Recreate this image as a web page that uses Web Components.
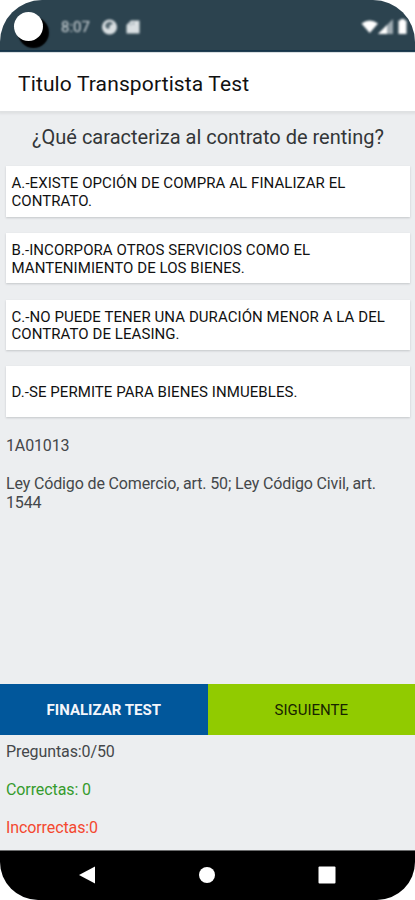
<!DOCTYPE html>
<html lang="es">
<head>
<meta charset="utf-8">
<meta name="viewport" content="width=device-width, initial-scale=1">
<title>Titulo Transportista Test</title>
<style>
    html, body {
        margin: 0;
        background: #fff;
        font-family: Roboto, "Liberation Sans", sans-serif;
    }
</style>
</head>
<body>
<test-app></test-app>

<script>
class StatusBar extends HTMLElement {

    constructor() {
        super();
        this.shadowDOM = this.attachShadow({mode: "open"});
    }

    connectedCallback() {
        this.render();
    }

    render() {
        this.shadowDOM.innerHTML = `
        <style>
            :host {
                display: flex;
                align-items: center;
                box-sizing: border-box;
                height: 52px;
                padding: 3px 4px 0 14px;
                background: #2c434f;
                border-bottom: 2px solid #153449;
                color: #d9dfe2;
            }

            .camera {
                width: 29px;
                height: 29px;
                border-radius: 50%;
                background: #fff;
                box-shadow: 5px 6px 1.5px 1px #000;
            }

            .time {
                margin-left: 18px;
                width: 41px;
                font-size: 15px;
                filter: blur(1px);
            }

            svg {
                display: block;
                fill: currentColor;
                filter: blur(0.8px);
            }

            .right {
                margin-left: auto;
                color: #fff;
            }
        </style>

        <div class="camera"></div>
        <span class="time">8:07</span>
        <svg width="40" height="18" viewBox="0 0 40 18">
            <circle cx="7.5" cy="9" r="7.5"/>
            <path d="M4 10a4 4 0 0 1 7-4l-3 1-1 4z" fill="#52656f"/>
            <path d="M29 2.500h8.500v13H24.500V7z"/>
            <path d="M28.500 5v2.500M31.500 4v3" stroke="#8d9aa2"/>
        </svg>
        <svg class="right" width="50" height="18" viewBox="0 0 50 18">
            <path d="M.500 5.500Q8.500 -0.500 17 5.500L8.700 15z"/>
            <path d="M17 16L32 1v15z" fill="#9eaab1"/>
            <path d="M17 16L26 7v9z"/>
            <path d="M37.500 2.500h2V1h4v1.500h2v13.500h-8z"/>
        </svg>`;
    }
}

class AppToolbar extends HTMLElement {

    constructor() {
        super();
        this.shadowDOM = this.attachShadow({mode: "open"});
    }

    connectedCallback() {
        this.render();
    }

    render() {
        this.shadowDOM.innerHTML = `
        <style>
            :host {
                display: flex;
                align-items: center;
                box-sizing: border-box;
                height: 59px;
                padding: 4px 18px 0;
                background: #fff;
                border-top: 1px solid #d8dee1;
                box-shadow: 0 2px 2px 1px #dfe1e3;
                color: #111;
                font-size: 21px;
                letter-spacing: 0.13px;
            }
        </style>

        <slot></slot>`;
    }
}

class AnswerOption extends HTMLElement {

    constructor() {
        super();
        this.shadowDOM = this.attachShadow({mode: "open"});
    }

    connectedCallback() {
        this.render();
    }

    render() {
        this.shadowDOM.innerHTML = `
        <style>
            :host {
                display: flex;
                align-items: center;
                box-sizing: border-box;
                height: 50.600px;
                padding: 3px 6px 0 5.500px;
                background: #fff;
                box-shadow: 0 1px 2px #c3c6c9;
                color: #111;
                font-size: 15px;
                line-height: 17.600px;
                letter-spacing: 0.07px;
            }
        </style>

        <span><slot></slot></span>`;
    }
}

class ActionButton extends HTMLElement {

    constructor() {
        super();
        this.shadowDOM = this.attachShadow({mode: "open"});
    }

    connectedCallback() {
        this.render();
    }

    render() {
        this.shadowDOM.innerHTML = `
        <style>
            :host {
                display: flex;
                align-items: center;
                justify-content: center;
                flex: 1;
                padding-top: 1px;
                background: #91cb00;
                color: #182400;
                font-size: 15px;
            }

            :host([primary]) {
                background: #01579b;
                color: #f4f6fb;
                font-weight: bold;
            }
        </style>

        <slot></slot>`;
    }
}

class ScoreBoard extends HTMLElement {

    constructor() {
        super();
        this.shadowDOM = this.attachShadow({mode: "open"});
    }

    connectedCallback() {
        this.render();
    }

    render() {
        this.shadowDOM.innerHTML = `
        <style>
            :host {
                display: flex;
                flex-direction: column;
                gap: 19px;
                box-sizing: border-box;
                height: 115px;
                padding: 7px 6px 0;
                font-size: 16px;
                line-height: 19px;
                letter-spacing: -0.1px;
                color: #44474a;
            }

            .right {
                color: #359b2d;
            }

            .wrong {
                color: #f4482f;
            }
        </style>

        <div>Preguntas:${this.getAttribute("current")}/${this.getAttribute("total")}</div>
        <div class="right">Correctas: ${this.getAttribute("right")}</div>
        <div class="wrong">Incorrectas:${this.getAttribute("wrong")}</div>`;
    }
}

class NavigationBar extends HTMLElement {

    constructor() {
        super();
        this.shadowDOM = this.attachShadow({mode: "open"});
    }

    connectedCallback() {
        this.render();
    }

    render() {
        this.shadowDOM.innerHTML = `
        <style>
            :host {
                display: flex;
                align-items: center;
                justify-content: space-between;
                box-sizing: border-box;
                height: 50px;
                padding: 0 79px 1px 78px;
                background: #000;
                border-top: 1px solid #6b6c6d;
            }

            svg {
                display: block;
                fill: #fff;
            }
        </style>

        <svg width="18" height="18" viewBox="0 0 18 18"><path d="M1 9L17 .5v17z"/></svg>
        <svg width="18" height="18" viewBox="0 0 18 18"><circle cx="9" cy="9" r="8"/></svg>
        <svg width="18" height="18" viewBox="0 0 18 18"><rect x=".5" y=".5" width="17" height="17" rx="1"/></svg>`;
    }
}

class TestApp extends HTMLElement {

    constructor() {
        super();
        this.shadowDOM = this.attachShadow({mode: "open"});
    }

    connectedCallback() {
        this.render();
    }

    render() {
        this.shadowDOM.innerHTML = `
        <style>
            :host {
                display: flex;
                flex-direction: column;
                width: 415px;
                height: 900px;
                overflow: hidden;
                background: #eceef0;
                border-radius: 42px 42px 38px 38px;
            }

            main {
                flex: 1;
                display: flex;
                flex-direction: column;
                padding: 14px 5px 0 6px;
            }

            h1 {
                margin: 0;
                font-size: 20px;
                font-weight: normal;
                line-height: 25px;
                text-align: center;
                color: #333638;
            }

            .options {
                display: flex;
                flex-direction: column;
                gap: 16.200px;
                margin-top: 16px;
            }

            .reference {
                margin-top: 19px;
                font-size: 16px;
                line-height: 19px;
                letter-spacing: -0.14px;
                color: #44474a;
            }

            .actions {
                display: flex;
                height: 51px;
            }
        </style>

        <status-bar></status-bar>
        <app-toolbar>Titulo Transportista Test</app-toolbar>
        <main>
            <h1>¿Qué caracteriza al contrato de renting?</h1>
            <div class="options">
                <answer-option>A.-EXISTE OPCIÓN DE COMPRA AL FINALIZAR EL CONTRATO.</answer-option>
                <answer-option>B.-INCORPORA OTROS SERVICIOS COMO EL MANTENIMIENTO DE LOS BIENES.</answer-option>
                <answer-option>C.-NO PUEDE TENER UNA DURACIÓN MENOR A LA DEL CONTRATO DE LEASING.</answer-option>
                <answer-option>D.-SE PERMITE PARA BIENES INMUEBLES.</answer-option>
            </div>
            <div class="reference">1A01013</div>
            <div class="reference">Ley Código de Comercio, art. 50; Ley Código Civil, art. 1544</div>
        </main>
        <div class="actions">
            <action-button primary>FINALIZAR TEST</action-button>
            <action-button>SIGUIENTE</action-button>
        </div>
        <score-board current="0" total="50" right="0" wrong="0"></score-board>
        <navigation-bar></navigation-bar>`;
    }
}

customElements.define("status-bar", StatusBar);
customElements.define("app-toolbar", AppToolbar);
customElements.define("answer-option", AnswerOption);
customElements.define("action-button", ActionButton);
customElements.define("score-board", ScoreBoard);
customElements.define("navigation-bar", NavigationBar);
customElements.define("test-app", TestApp);
</script>
</body>
</html>
